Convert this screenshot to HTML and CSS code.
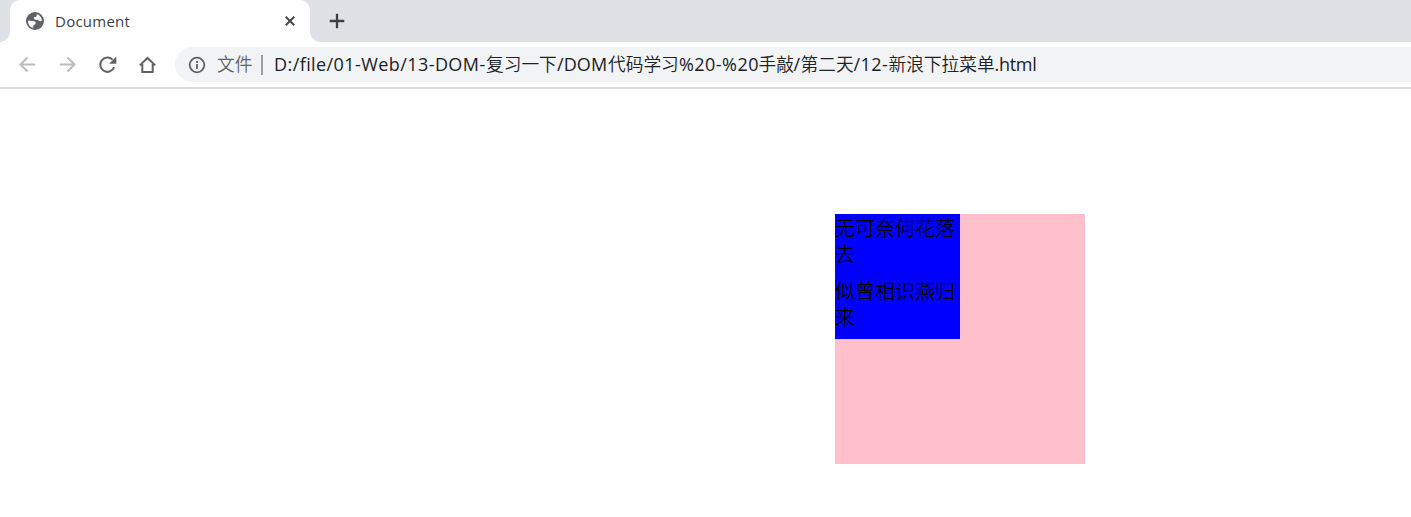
FILE: index.html
```html
<!DOCTYPE html>
<html lang="zh-CN">
<head>
<meta charset="UTF-8">
<title>Document</title>
<link rel="stylesheet" href="styles.css">
</head>
<body>
<header class="tabs">
  <div class="tab">
    <svg class="globe" viewBox="0 0 18 18"><circle cx="9" cy="9" r="9" fill="#5f6368"/><path d="M2.1 8.7C4.1 8.7 5.5 8.7 7 9 8.5 9.2 9.8 9.7 9.7 11 9.6 12.4 8.6 12.7 7.5 12.9L7.2 15.8C3.7 15.1 1.8 12 2.1 8.7ZM10.9 2.2C13.6 3 15.6 5.3 15.9 8.2 15 9.8 12.7 9.5 12 7.8 10.3 8.2 8.2 7.7 7.6 6.1 8 4.5 9.6 5.2 10.4 4.4Z" fill="#fff"/></svg>
    <span class="title">Document</span>
    <svg class="close" viewBox="0 0 10 10"><path d="M.7.7l8.6 8.6M9.3.7L.7 9.3"/></svg>
  </div>
  <svg class="plus" viewBox="0 0 16 16"><path d="M8 .7v14.6M.7 8h14.6"/></svg>
</header>
<nav class="toolbar">
  <svg class="nav off" viewBox="0 0 20 20"><path d="M17.2 9.5H3M9.5 2.5L2.5 9.5l7 7"/></svg>
  <svg class="nav off" viewBox="0 0 20 20"><path d="M1.8 9.5H16M9.5 2.5l7 7-7 7"/></svg>
  <svg class="nav" viewBox="0 0 20 20"><path d="M16.2 12.2A7.2 7.2 0 1 1 14.6 4.6"/><path class="solid" d="M18.3 1.6v7.2h-7.2z"/></svg>
  <svg class="nav" viewBox="0 0 20 20"><path d="M1.8 10.4L9.5 3l7.7 7.4M4.3 9v8h10.4V9"/></svg>
  <div class="address">
    <svg class="info" viewBox="0 0 18 18"><circle cx="9" cy="9" r="7.3"/><path d="M9 8v5M9 5v2"/></svg>
    <span class="scheme">文件</span><i class="bar"></i>
    <div class="url"><span class="p1">D:/file/01-Web/13-DOM-</span><span class="p2">复习一下</span><span class="p3">/DOM</span><span class="p4">代码学习</span><span class="p5">%20-%20</span><span class="p6">手敲</span><span class="p7">/</span><span class="p8">第二天</span><span class="p9">/12-</span><span class="p10">新浪下拉菜单</span><span class="p11">.html</span></div>
  </div>
</nav>
<main>
  <div class="pink"><ul class="menu"><li>无可奈何花落去</li><li>似曾相识燕归来</li></ul></div>
</main>
</body>
</html>
```
FILE: styles.css
```css
* { box-sizing: border-box; }
body { margin: 0; height: 517px; overflow: hidden; background: #fff; font-family: "Noto Sans", "Noto Sans CJK SC", sans-serif; }
svg { display: block; fill: none; flex: none; }
.tabs { height: 42px; background: #dee1e6; display: flex; align-items: center; }
.tab { position: relative; width: 300px; height: 42px; margin-left: 10px; padding: 0 15px 0 16px; background: #fff; border-radius: 10px 10px 0 0; display: flex; align-items: center; }
.tab::before, .tab::after { content: ""; position: absolute; bottom: 0; width: 10px; height: 10px; }
.tab::before { left: -10px; background: radial-gradient(circle at 0 0, transparent 9.5px, #fff 10px); }
.tab::after { right: -10px; background: radial-gradient(circle at 100% 0, transparent 9.5px, #fff 10px); }
.globe { width: 18px; height: 18px; }
.title { margin-left: 11px; font: 15px/20px "Open Sans", sans-serif; letter-spacing: .25px; color: #3c4043; flex: 1; }
.close { width: 10px; height: 10px; stroke: #45494d; stroke-width: 2; }
.plus { width: 16px; height: 16px; margin-left: 19px; stroke: #3c4043; stroke-width: 2.3; }
.toolbar { height: 47px; border-bottom: 2px solid #dadce0; padding: 5px 0 5px 18px; display: flex; align-items: center; gap: 20px; }
.nav { width: 20px; height: 20px; stroke: #5f6368; stroke-width: 2; }
.off { stroke: #babcbe; }
.solid { fill: #5f6368; stroke: none; }
.address { flex: 1; height: 35px; margin-left: -3px; padding-left: 13px; background: #f1f3f4; border-radius: 18px 0 0 18px; display: flex; align-items: center; font-size: 17.7px; line-height: 26px; white-space: nowrap; }
.info { width: 18px; height: 18px; stroke: #5f6368; stroke-width: 1.8; }
.scheme { margin-left: 11px; padding-bottom: 2px; width: 36px; color: #5f6368; font-weight: 350; }
.bar { width: 2px; height: 20px; margin: 0 11px 0 8px; background: #9aa0a6; }
.url { display: flex; align-items: baseline; padding-bottom: 2px; color: #202124; font-family: "Open Sans", "Noto Sans CJK SC", sans-serif; font-size: 18px; font-weight: 400; }
.url span { flex: none; }
.url .p2, .url .p4, .url .p6, .url .p8, .url .p10 { font: 350 17.7px/26px "Noto Sans CJK SC", sans-serif; }
.p1 { width: 212px; letter-spacing: .42px; }
.p2, .p4 { width: 71px; }
.p3 { width: 51px; letter-spacing: .1px; }
.p5 { width: 79.5px; letter-spacing: .45px; }
.p6 { width: 35px; }
.p7 { width: 7px; }
.p8 { width: 53px; }
.p9 { width: 35px; letter-spacing: .4px; }
.p10 { width: 106px; }
.p11 { letter-spacing: -.3px; }
main { padding: 125px 0 0 835px; }
.pink { width: 250px; height: 250px; background: pink; }
.menu { width: 125px; height: 125px; margin: 0; padding: 0; list-style: none; background: blue; color: #000; font: 350 20px/26px "Noto Sans CJK SC", sans-serif; }
.menu li { height: 62.5px; padding-top: 1px; }
```
